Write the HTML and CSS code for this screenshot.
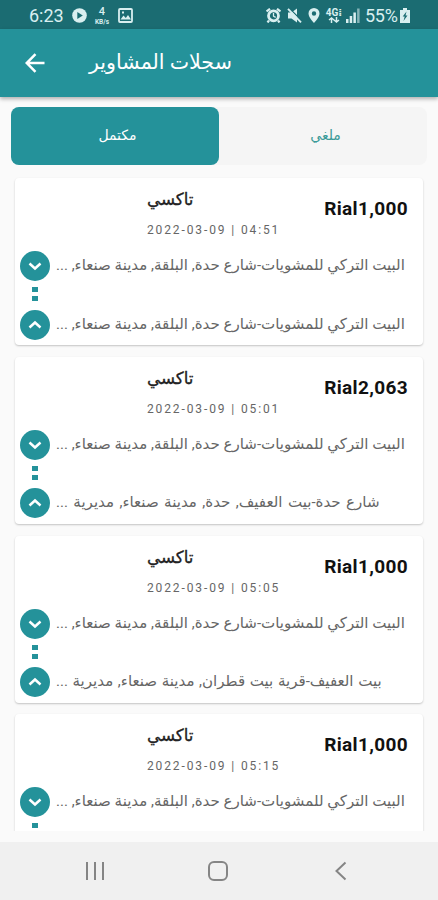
FILE: index.html
```html
<!DOCTYPE html>
<html lang="ar">
<head>
    <meta charset="UTF-8">
    <meta name="viewport" content="width=device-width, initial-scale=1.0">
    <title>سجلات المشاوير</title>
    <link rel="stylesheet" href="styles.css">
</head>
<body>
    <svg width="0" height="0" class="defs">
        <symbol id="down" viewBox="0 0 30 30"><circle cx="15" cy="15" r="15" fill="#24929a"/><path d="M9.500 12.500l5.500 5 5.500-5" fill="none" stroke="#fff" stroke-width="2.500"/></symbol>
        <symbol id="up" viewBox="0 0 30 30"><circle cx="15" cy="15" r="15" fill="#24929a"/><path d="M9.500 17.500l5.500-5 5.500 5" fill="none" stroke="#fff" stroke-width="2.500"/></symbol>
    </svg>

    <div class="status">
        <span class="time">6:23</span>
        <svg class="play" width="15" height="15" viewBox="0 0 15 15"><circle cx="7.500" cy="7.500" r="7.300" fill="#d9eff0"/><path d="M5.300 4v7l5.500-3.500z" fill="#1b6c72"/></svg>
        <div class="speed"><b>4</b><span>KB/s</span></div>
        <svg class="image" width="15" height="15" viewBox="0 0 15 15"><rect x="1" y="1" width="13" height="13" rx="1" fill="none" stroke="#d9eff0" stroke-width="1.800"/><path d="M2.500 11.500l3-4 2.300 2.500 2.200-3 3 4.500zM4 3.500h2v2H4z" fill="#d9eff0"/></svg>
        <div class="right">
            <svg class="alarm" width="15" height="15" viewBox="0 0 15 15"><path d="M.5 3.500L4 .8M14.500 3.500L11 .8M3 12.500l-1.500 2M12 12.500l1.500 2" stroke="#d9eff0" stroke-width="2.200"/><circle cx="7.500" cy="7.800" r="5" fill="none" stroke="#d9eff0" stroke-width="2.800"/><path d="M7.500 5v3.200l2.200 1.200" fill="none" stroke="#d9eff0" stroke-width="1.300"/></svg>
            <svg class="mute" width="15" height="15" viewBox="0 0 15 15"><path d="M1 4.500h3.500L10 .5v14L4.500 10.500H1z" fill="#d9eff0"/><path d="M2.500.500l12 12" stroke="#1b6c72" stroke-width="1.300"/><path d="M1 .8l13 13.500" stroke="#d9eff0" stroke-width="1.900"/></svg>
            <svg class="pin" width="12" height="15" viewBox="0 0 12 15"><path fill-rule="evenodd" d="M6 0a5.500 5.500 0 0 0-5.500 5.500C.5 9.500 6 15 6 15s5.500-5.500 5.500-9.500A5.500 5.500 0 0 0 6 0zm0 3.300a2.200 2.200 0 1 1 0 4.400 2.200 2.200 0 0 1 0-4.400z" fill="#d9eff0"/></svg>
            <div class="lte"><span>4G⁞</span><svg width="12" height="6" viewBox="0 0 12 6"><path d="M3.500 6V1M1 3l2.500-2L6 3M8.500 0v5M6 3l2.500 2L11 3" fill="none" stroke="#d9eff0" stroke-width="1.500"/></svg></div>
            <svg class="signal" width="14" height="15" viewBox="0 0 14 15"><path d="M0 11h2.500v4H0zM3.700 8h2.500v7H3.700zM7.400 4.500h2.500V15H7.400z" fill="#d9eff0"/><path d="M11.100.5h2.500V15h-2.500z" fill="#86b5b8"/></svg>
            <span class="percent">55%</span>
            <svg class="battery" width="10" height="15" viewBox="0 0 10 15"><path d="M3 0h4v2h3v13H0V2h3z" fill="#d9eff0"/><path d="M6.500 3.500L2.700 8.500h2L3.500 13l4-5.500h-2z" fill="#1b6c72"/></svg>
        </div>
    </div>

    <header class="header">
        <svg class="back" width="20" height="20" viewBox="0 0 20 20"><path d="M19.500 10H2M10.500 1.200L1.700 10l8.800 8.800" fill="none" stroke="#fff" stroke-width="2.500"/></svg>
        <h1 dir="rtl">سجلات المشاوير</h1>
    </header>

    <nav class="tabs">
        <div class="tab active">مكتمل</div>
        <div class="tab">ملغي</div>
    </nav>

    <main class="list">
        <article class="card">
            <div class="top">
                <div class="info">
                    <h2>تاكسي</h2>
                    <time>2022-03-09 | 04:51</time>
                </div>
                <strong class="price">Rial1,000</strong>
            </div>
            <div class="place"><svg><use href="#down"/></svg><p dir="rtl">البيت التركي للمشويات-شارع حدة, البلقة, مدينة صنعاء, ...</p></div>
            <div class="dots"><i></i><i></i></div>
            <div class="place"><svg><use href="#up"/></svg><p dir="rtl">البيت التركي للمشويات-شارع حدة, البلقة, مدينة صنعاء, ...</p></div>
        </article>

        <article class="card">
            <div class="top">
                <div class="info">
                    <h2>تاكسي</h2>
                    <time>2022-03-09 | 05:01</time>
                </div>
                <strong class="price">Rial2,063</strong>
            </div>
            <div class="place"><svg><use href="#down"/></svg><p dir="rtl">البيت التركي للمشويات-شارع حدة, البلقة, مدينة صنعاء, ...</p></div>
            <div class="dots"><i></i><i></i></div>
            <div class="place wide"><svg><use href="#up"/></svg><p dir="rtl">شارع حدة-بيت العفيف, حدة, مدينة صنعاء, مديرية ...</p></div>
        </article>

        <article class="card">
            <div class="top">
                <div class="info">
                    <h2>تاكسي</h2>
                    <time>2022-03-09 | 05:05</time>
                </div>
                <strong class="price">Rial1,000</strong>
            </div>
            <div class="place"><svg><use href="#down"/></svg><p dir="rtl">البيت التركي للمشويات-شارع حدة, البلقة, مدينة صنعاء, ...</p></div>
            <div class="dots"><i></i><i></i></div>
            <div class="place loose"><svg><use href="#up"/></svg><p dir="rtl">بيت العفيف-قرية بيت قطران, مدينة صنعاء, مديرية ...</p></div>
        </article>

        <article class="card">
            <div class="top">
                <div class="info">
                    <h2>تاكسي</h2>
                    <time>2022-03-09 | 05:15</time>
                </div>
                <strong class="price">Rial1,000</strong>
            </div>
            <div class="place"><svg><use href="#down"/></svg><p dir="rtl">البيت التركي للمشويات-شارع حدة, البلقة, مدينة صنعاء, ...</p></div>
            <div class="dots"><i></i></div>
        </article>
    </main>

    <footer class="navbar">
        <svg width="20" height="20" viewBox="0 0 20 20"><path d="M2 1v18M10 1v18M18 1v18" stroke="#858585" stroke-width="2"/></svg>
        <svg width="20" height="20" viewBox="0 0 20 20"><rect x="1" y="1" width="18" height="18" rx="5" fill="none" stroke="#858585" stroke-width="2"/></svg>
        <svg width="20" height="20" viewBox="0 0 20 20"><path d="M14.500 1.500L5.500 10l9 8.500" fill="none" stroke="#858585" stroke-width="2"/></svg>
    </footer>
</body>
</html>
```
FILE: styles.css
```css
* {
    box-sizing: border-box;
}

body {
    margin: 0;
    width: 438px;
    height: 900px;
    overflow: hidden;
    display: flex;
    flex-direction: column;
    background-color: #fafafa;
    font-family: Roboto, "DejaVu Sans", sans-serif;
}

h1, h2, p {
    margin: 0;
    font-weight: normal;
    white-space: nowrap;
}

svg {
    display: block;
    flex: none;
}

.defs {
    position: absolute;
}

.status {
    flex: none;
    display: flex;
    align-items: center;
    height: 29px;
    padding: 2px 28px 0 29px;
    background-color: #1b6c72;
    color: #d9eff0;
}

.time {
    width: 43px;
    font-size: 18px;
}

.speed {
    display: flex;
    flex-direction: column;
    align-items: center;
    width: 18px;
    margin: 0 7px 0 6px;
}

.speed b {
    font-size: 11px;
    font-weight: 500;
    line-height: 12px;
}

.speed span {
    font-size: 6.500px;
    font-weight: bold;
    line-height: 8px;
}

.right {
    display: flex;
    align-items: center;
    margin-left: auto;
}

.mute {
    margin-left: 6px;
}

.pin {
    margin-left: 6px;
}

.lte {
    display: flex;
    flex-direction: column;
    align-items: center;
    width: 18px;
    margin: 0 3px 0 5px;
    font-size: 10px;
    font-weight: bold;
    line-height: 9px;
}

.percent {
    width: 34px;
    margin: 0 1px 0 5px;
    font-size: 18px;
    letter-spacing: -0.300px;
}

.header {
    flex: none;
    position: relative;
    display: flex;
    align-items: center;
    height: 68px;
    padding-left: 25px;
    background-color: #24929a;
    color: #fff;
    box-shadow: 0 2px 4px rgba(0, 0, 0, 0.3);
}

.header h1 {
    margin-left: 44px;
    padding-bottom: 2px;
    font-size: 20.600px;
}

.tabs {
    flex: none;
    display: flex;
    height: 58px;
    margin: 10px 11px 0 11px;
    background-color: #f5f5f5;
    border-radius: 8px;
}

.tab {
    flex: 1;
    display: flex;
    align-items: center;
    justify-content: center;
    padding: 0 0 3px 5px;
    border-radius: 8px;
    color: #3a9a98;
    font-size: 14px;
}

.tab.active {
    background-color: #24929a;
    color: #fff;
}

.list {
    flex: none;
    height: 655px;
    margin-top: 11px;
    padding: 2px 15px 0;
    overflow: hidden;
}

.card {
    height: 167.300px;
    margin-bottom: 11.500px;
    padding: 0 15px 0 5px;
    background-color: #fff;
    border-radius: 4px;
    box-shadow: 0 1px 2px rgba(0, 0, 0, 0.22);
}

.top {
    display: flex;
    justify-content: space-between;
    height: 73px;
}

.info {
    display: flex;
    flex-direction: column;
    align-items: flex-start;
    padding: 10px 0 0 127px;
}

.info h2 {
    height: 34px;
    color: #222;
    font-size: 16.700px;
    line-height: 24px;
    -webkit-text-stroke: 0.3px #222;
}

.info time {
    color: #666;
    font-size: 12px;
    line-height: 16px;
    letter-spacing: 1.880px;
}

.price {
    padding-top: 18px;
    color: #111;
    font-size: 19px;
    line-height: 26px;
    letter-spacing: 0.350px;
}

.place {
    display: flex;
    align-items: center;
    gap: 6px;
    height: 30px;
}

.place svg {
    width: 30px;
    height: 30px;
}

.place p {
    padding-bottom: 2px;
    color: #666;
    font-size: 15.050px;
    line-height: 24px;
}

.place.wide p {
    word-spacing: 1.700px;
}

.place.loose p {
    word-spacing: 0.900px;
}

.dots {
    display: flex;
    flex-direction: column;
    gap: 4px;
    width: 30px;
    height: 28.500px;
    padding-top: 6px;
    align-items: center;
}

.dots i {
    width: 6px;
    height: 5px;
    background-color: #24929a;
}

.navbar {
    display: flex;
    justify-content: space-between;
    align-items: center;
    height: 58px;
    margin-top: auto;
    padding: 0 87px 0 85px;
    background-color: #f0f0f0;
}
```
